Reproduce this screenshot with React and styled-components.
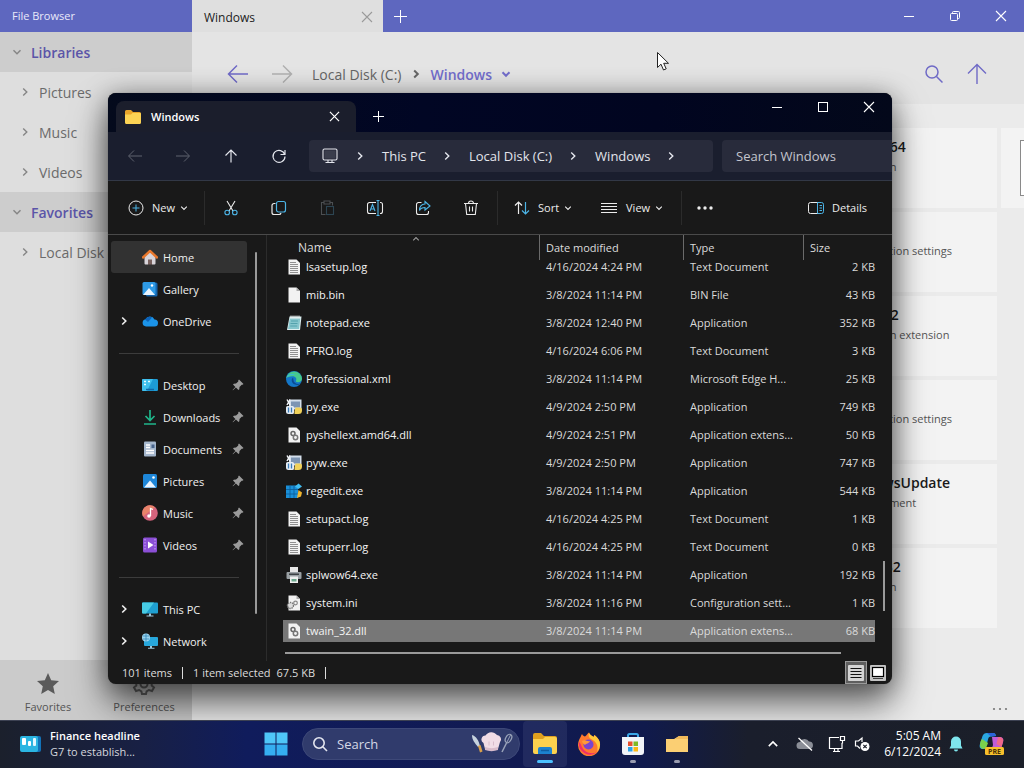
import React from "react";
import styled, { createGlobalStyle, css } from "styled-components";

const Global = createGlobalStyle`
  * { box-sizing: border-box; }
  html, body { margin: 0; }
  body, button, input { font-family: "Open Sans", "Noto Sans", sans-serif; }
  button { border: 0; padding: 0; background: none; color: inherit; font-size: inherit; cursor: default; }
  a { color: inherit; text-decoration: none; }
  svg { display: block; flex: none; }
`;

/* ---------- icons ---------- */

const Line = ({ w = 16, h = w, vb = "0 0 16 16", sw = 1, color = "currentColor", children }) => (
  <svg width={w} height={h} viewBox={vb} fill="none" stroke={color} strokeWidth={sw} aria-hidden="true">{children}</svg>
);
const Art = ({ w = 16, h = w, vb = "0 0 16 16", children }) => (
  <svg width={w} height={h} viewBox={vb} aria-hidden="true">{children}</svg>
);

const Chevron = ({ dir = "right", size = 10, sw = 1.4, color }) => {
  const d = { right: "M3.2 1.5 6.8 5 3.2 8.5", down: "M1.5 3.2 5 6.8 8.5 3.2", up: "M1.5 6.8 5 3.2 8.5 6.8" }[dir];
  return <Line w={size} vb="0 0 10 10" sw={sw} color={color}><path d={d} /></Line>;
};
const Close = ({ size = 12, sw = 1.1 }) => <Line w={size} vb="0 0 12 12" sw={sw}><path d="M1 1l10 10M11 1 1 11" /></Line>;
const Plus = ({ size = 13 }) => <Line w={size} vb={`0 0 ${size} ${size}`} sw={1}><path d={`M${size / 2} 0v${size}M0 ${size / 2}h${size}`} /></Line>;
const Minus = () => <Line w={12} vb="0 0 12 12" sw={1}><path d="M1 6.5h10" /></Line>;
const Square = () => <Line w={12} vb="0 0 12 12" sw={1}><rect x="1.5" y="1.5" width="9" height="9" /></Line>;
const Restore = () => <Line w={12} vb="0 0 12 12" sw={1}><rect x="1.5" y="3.5" width="7" height="7" rx="1" /><path d="M3.5 3.5v-1a1 1 0 0 1 1-1h5a1 1 0 0 1 1 1v5a1 1 0 0 1-1 1h-1" /></Line>;
const BigArrow = ({ flip }) => <Line w={22} vb="0 0 22 22" sw={1.5}>{flip ? <path d="M1 11h19M12 2.5l8.5 8.5-8.5 8.5" /> : <path d="M21 11H2M10 2.5 1.5 11l8.5 8.5" />}</Line>;
const BigUp = () => <Line w={22} vb="0 0 22 22" sw={1.4}><path d="M11 21V2M2 10.5 11 1.5l9 9" /></Line>;
const BigSearch = () => <Line w={20} vb="0 0 20 20" sw={1.5}><circle cx="8" cy="8" r="6" /><path d="m12.5 12.5 6 6" /></Line>;

const ArrowL = () => <Line><path d="M15 8H2M7 2.5 1.5 8 7 13.5" /></Line>;
const ArrowR = () => <Line><path d="M1 8h13M9 2.5 14.5 8 9 13.5" /></Line>;
const ArrowU = () => <Line sw={1.2}><path d="M8 14.5V2M2.5 7.500 8 2l5.500 5.500" /></Line>;
const Refresh = () => <Line sw={1.2}><path d="M13.700 6.500A6 6 0 1 0 14 8.500M14 2v4.500H9.500" /></Line>;
const Monitor = () => <Line sw={1.1}><rect x="1" y="1" width="14" height="11" rx="1.500" /><path d="M6 12v2.500M10 12v2.500M3.500 14.500h9" /><rect x="2.500" y="2.500" width="11" height="8" fill="#3a3d4c" stroke="none" /></Line>;

const BLUE = "#4cb4e6";
const NewIcon = () => <Line><circle cx="8" cy="8" r="7" /><path d="M8 4.500v7M4.500 8h7" stroke={BLUE} /></Line>;
const Cut = () => <Line sw={1.1}><path d="m4 1 6 10M12 1 6 11" /><circle cx="4.200" cy="12.500" r="2.300" stroke={BLUE} /><circle cx="11.800" cy="12.500" r="2.300" stroke={BLUE} /></Line>;
const Copy = () => <Line sw={1.2}><path d="M4.500 3.500H3a2 2 0 0 0-2 2v7a2 2 0 0 0 2 2h5a2 2 0 0 0 2-1.500" /><rect x="5.500" y="1.500" width="9" height="10.500" rx="2" stroke={BLUE} /></Line>;
const Paste = () => <Line color="#4c4f52" sw={1.1}><path d="M4.500 2.500h-2v12h4M11.500 2.500h2v3M5 1h6v3H5z" /><rect x="7.500" y="6.500" width="7" height="8" stroke="#2d4552" /></Line>;
const Rename = () => <Line w={18} h={16} vb="0 0 18 16" sw={1.1}><path d="M10 2.500H3.500a2 2 0 0 0-2 2v7a2 2 0 0 0 2 2H10M14 2.500h.5a2 2 0 0 1 2 2v7a2 2 0 0 1-2 2H14" /><path d="M12 0v16M10.500.500h3M10.500 15.500h3M4 11l2.500-6.500L9 11M5 9h3" stroke={BLUE} /></Line>;
const Share = () => <Line sw={1.1}><path d="M6.500 2.500h-3a2 2 0 0 0-2 2v8a2 2 0 0 0 2 2h8a2 2 0 0 0 2-2V11" /><path d="M10 1.500 15 6l-5 4V7.500c-3 0-4.500 1-5.500 3 0-4 2-6.300 5.500-6.500z" stroke={BLUE} /></Line>;
const Trash = () => <Line sw={1.1}><path d="M1 3.500h14M5.500 3.500a2.500 2.500 0 0 1 5 0M2.500 3.500l1.200 11h8.600l1.200-11M6.500 6.500v5M9.500 6.500v5" /></Line>;
const Sort = () => <Line sw={1.2}><path d="M4.500 14V2M1 5.500 4.500 2 8 5.500" /><path d="M11.500 2v12M8 10.500l3.500 3.500 3.500-3.500" stroke={BLUE} /></Line>;
const ViewIcon = () => <Line w={18} h={12} vb="0 0 18 12"><path d="M1 1.500h16M1 4.500h16M1 7.500h16M1 10.500h16" /></Line>;
const Dots = ({ r = 1.7 }) => <Art w={18} h={4} vb="0 0 18 4"><g fill="currentColor"><circle cx="3" cy="2" r={r} /><circle cx="9" cy="2" r={r} /><circle cx="15" cy="2" r={r} /></g></Art>;
const DetailsIcon = () => <Line w={16} h={14} vb="0 0 16 14"><path d="M10 1.500H2.500a2 2 0 0 0-2 2v7a2 2 0 0 0 2 2H10" /><path d="M9.500 1.500h4a2 2 0 0 1 2 2v7a2 2 0 0 1-2 2h-4zM11.500 4.500H14M11.500 7H14M11.500 9.500H14" stroke={BLUE} /></Line>;

const FolderArt = ({ w = 18, h = 16 }) => <Art w={w} h={h} vb="0 0 18 16"><path d="M1 2.500A1.500 1.500 0 0 1 2.500 1H7l2 2h6.500A1.500 1.500 0 0 1 17 4.500V6H1z" fill="#e9a52a" /><path d="M1 5.500h6L8.500 4H16a1 1 0 0 1 1 1v8.500a1.500 1.500 0 0 1-1.500 1.500h-13A1.500 1.500 0 0 1 1 13.500z" fill="#fcd354" /></Art>;
const Pin = () => <Art w={12} vb="0 0 12 12"><path d="M7 .5 11.500 5l-1 .8-.8-.1L7.500 8l-.2 2.300-.8.700-2.600-2.500L1 11.300.6 11l2.800-3L1 5.500l.8-.7L4 4.600l2.300-2.200-.1-.9z" fill="#9b9b9b" /></Art>;

const navArt = {
  home: <Art><path d="M2.500 7 8 2.500 13.500 7v7.500a1 1 0 0 1-1 1H10V11H6v4.500H3.500a1 1 0 0 1-1-1z" fill="#d8d4da" /><path d="M6 10.500h4v5H6z" fill="#78615e" /><path d="M1 8.500 8 2l7 6.500" fill="none" stroke="#e8772c" strokeWidth="2.400" strokeLinecap="round" strokeLinejoin="round" /></Art>,
  gallery: <Art><rect x="4" y="1.500" width="11.500" height="14" rx="1.500" fill="#1565ad" /><rect x=".5" y="1" width="13" height="13" rx="1.500" fill="#2e9ae6" /><path d="m1 14 6-7 6 7z" fill="#e9f5ff" /><circle cx="10" cy="4.500" r="1.200" fill="#fff" /></Art>,
  cloud: <Art><path d="M4 13.500a3.700 3.700 0 0 1-.5-7.300 5 5 0 0 1 9 .3A3.500 3.500 0 0 1 12.500 13.500z" fill="#1b93e8" /><path d="M3 6.500a5 5 0 0 1 7-2L6 9z" fill="#0b62b8" /></Art>,
  desktop: <Art><rect x="0" y="2" width="16" height="12" rx="1.200" fill="#1c9bd6" /><path d="M0 3.200A1.200 1.200 0 0 1 1.200 2H11L5 14H1.200A1.200 1.200 0 0 1 0 12.800z" fill="#3fc0ee" /><path d="M2 4.500h2M2 7.500h2M6 4.500h2" stroke="#e7faff" strokeWidth="1.500" /><path d="M4 12.500h8" stroke="#1169a8" strokeWidth="1.500" /></Art>,
  downloads: <Art><path d="M8 1v10M3.500 7 8 11.500 12.500 7M2 15h12" fill="none" stroke="#1fb58a" strokeWidth="1.700" /></Art>,
  documents: <Art><rect x="2" y=".5" width="12" height="15" rx="1" fill="#a4b6cc" /><path d="M4 4h4M4 6.500h4M4 9.500h8M4 12h8" stroke="#fff" strokeWidth="1.300" /><rect x="9.500" y="3.500" width="3" height="3.500" fill="#49658c" /></Art>,
  pictures: <Art><rect x="1" y="1" width="14" height="14" rx="1.500" fill="#1d86d8" /><path d="m2 14.500 6-7 6 7z" fill="#e9f5ff" /><circle cx="11.500" cy="4.500" r="1.300" fill="#fff" /></Art>,
  music: <Art><circle cx="8" cy="8" r="7.800" fill="#d4637c" /><path d="M8 .2A7.800 7.800 0 0 0 1 11.500L13 2.200A7.800 7.800 0 0 0 8 .2z" fill="#e8836a" /><path d="M8.500 11V3.500l2.500 1" fill="none" stroke="#fff" strokeWidth="1.300" /><circle cx="7" cy="11" r="1.800" fill="#fff" /></Art>,
  videos: <Art><rect x="1" y=".5" width="14" height="15" rx="1.500" fill="#8b4fd6" /><path d="M3 2v12M13 2v12" stroke="#cda9f7" strokeDasharray="1.500 1.500" /><path d="M6 4.500 11.500 8 6 11.500z" fill="#fff" /></Art>,
  pc: <Art><rect x="0" y="1.500" width="16" height="11" rx="1" fill="#1f9fd0" /><path d="M0 2.500a1 1 0 0 1 1-1h11L4 12.500H1a1 1 0 0 1-1-1z" fill="#47cbe4" /><path d="M7 12.500h2V15H7zM4.500 14.500h7v1h-7z" fill="#9fc8dc" /></Art>,
  network: <Art><rect x="2" y="4" width="14" height="9" rx="1" fill="#27a7dc" /><path d="M8 13h2v2H8zM6 14.700h6.500v1H6z" fill="#9fc8dc" /><circle cx="4" cy="4.500" r="4" fill="#9bd4ef" /><path d="M1 3h6M1 6h6M4 .5v8" stroke="#2a7fb2" strokeWidth=".7" /></Art>,
};

const page = <path d="M2.500.5h8L14 4v11.500H2.500z" fill="#f2f2f2" />;
const fileArt = {
  log: <Art>{page}<path d="M4 3.500h6M4 5.500h8M4 7.500h8M4 9.500h8M4 11.500h8M4 13.500h8" stroke="#858585" strokeWidth=".9" /></Art>,
  bin: <Art>{page}<path d="M10.500.5V4H14z" fill="#a9a9a9" /></Art>,
  notepad: <Art><path d="M3.500 1.500H15.500L14 15H1z" fill="#dff0f1" /><path d="M3.800 3.500h10.500L13 14H2z" fill="#86c6cd" /><path d="M5 .5v3M7 .5v3M9 .5v3M11 .5v3M13 .5v3" stroke="#e8eeee" /><path d="M5 6h7M4.500 8.500h7M4.200 11h7" stroke="#4899a5" strokeWidth=".8" /></Art>,
  edge: <Art><circle cx="8" cy="8" r="8" fill="#1477c8" /><path d="M.2 7A8 8 0 0 1 16 7.500c0 2.500-2 3.700-4 3.700-2.200 0-2.500-1-2-1.700 1.200-2-.8-4.500-3.800-4.300C3.500 5.300 1 6.500.2 7z" fill="#46c98c" /><path d="M.2 7C1.500 3.500 6 1.800 10 4 6 3 1.500 5 .2 7z" fill="#36b8e6" /><path d="M7 6.500c-2.500 2-1.500 7 4 7.500 1.500 0 3-.7 3.700-1.500-3.700 1.300-7.200-.5-7.200-3.500z" fill="#0b4a94" /></Art>,
  py: <Art><rect x="3" y=".5" width="12.500" height="10" fill="#d4dfeb" /><path d="M5 2.500h9v6H5z" fill="#7d95b3" /><path d="M1 .5 4 6M4 .5 1 6" stroke="#f2f5f9" strokeWidth="1.400" /><path d="M1.500 7h5A1.500 1.500 0 0 1 8 8.500v5A1.500 1.500 0 0 1 6.500 15h-4A2.500 2.500 0 0 1 0 12.500v-4A1.500 1.500 0 0 1 1.500 7z" fill="#e6edf5" /><path d="M2.500 8.500v5M5.500 8.500v5" stroke="#3a7cb8" strokeWidth="1.300" /><path d="M9.500 8.500H14a2 2 0 0 1 2 2v1a3.500 3.500 0 0 1-3.500 3.500H8.500v-3z" fill="#f1d25a" /></Art>,
  dll: <Art>{page}<circle cx="7" cy="6.500" r="2" fill="none" stroke="#666" strokeWidth="1.500" /><circle cx="9.500" cy="10.500" r="2.200" fill="none" stroke="#777" strokeWidth="1.500" /></Art>,
  reg: <Art><rect x="0" y="2.500" width="12" height="12.500" fill="#1a8fd8" /><path d="M4 2.500V15M8 2.500V15M0 6.500h12M0 11h12" stroke="#0b5c97" strokeWidth=".8" /><path d="m12.500.5 3.500 3L12.500 6 9 3.500z" fill="#41bdf1" /><path d="m12.500 7 3.500 2.500-1 4-4 1.500z" fill="#f0b52f" /></Art>,
  printer: <Art><path d="M4 0h8v6H4z" fill="#e6e6e6" /><rect x=".5" y="5" width="15" height="7" rx="1" fill="#9aa0a4" /><rect x="3" y="6.500" width="10" height="1.500" fill="#3c4144" /><path d="M4 9.500h8V16H4z" fill="#f0f0f0" /><path d="M5.500 12h5v2.500h-5z" fill="#6aa88c" /></Art>,
  ini: <Art>{page}<path d="M10.500.5V4H14z" fill="#a9a9a9" /><circle cx="4.500" cy="10.500" r="3" fill="#ddd" stroke="#777" strokeWidth="1.400" strokeDasharray="1.400 .8" /><circle cx="9.500" cy="8" r="1.800" fill="none" stroke="#888" strokeWidth="1.200" /></Art>,
};

/* ---------- desktop and background app ---------- */

const Desktop = styled.div`
  position: relative; min-height: 100vh; display: flex; flex-direction: column; overflow: hidden;
  background: #ebebeb; color: #222;
`;
const Browser = styled.div`flex: 1; display: flex; flex-direction: column;`;
const BrowserTitle = styled.header`
  display: flex; height: 32px; background: #5e67bf; color: #fff;
`;
const AppName = styled.div`width: 192px; padding-left: 12px; font-size: 11px; line-height: 32px; color: #e9e9fa;`;
const BrowserTab = styled.div`
  width: 191px; padding: 2px 10px 0 12px; display: flex; align-items: center; justify-content: space-between;
  background: #dfdfdf; color: #1c1c1c; font-size: 12px;
  button { color: #9a9a9a; }
`;
const CaptionButton = styled.button`
  width: ${(p) => p.$w || 46}px; padding-top: ${(p) => p.$pt || 0}px;
  display: flex; align-items: center; justify-content: center;
`;
const Spacer = styled.div`flex: 1;`;
const BrowserBody = styled.div`flex: 1; display: flex;`;
const Side = styled.nav`width: 192px; display: flex; flex-direction: column; background: #dedede;`;
const SideItem = styled.a`
  height: 40px; display: flex; align-items: center; gap: 9px; padding-left: 20px; font-size: 14px; color: #6b6b6b; white-space: nowrap;
  ${(p) => p.$head && css`padding-left: 12px; background: #cdcdcd; color: #5b55a8; font-weight: 600;`}
  svg { color: #858585; }
`;
const SideFoot = styled.div`display: flex; height: 60px; background: #cbcbcb;`;
const FootButton = styled.button`
  flex: 1; display: flex; flex-direction: column; align-items: center; padding-top: 12px; gap: 3px;
  font-size: 11px; line-height: 16px; color: #555;
`;
const Main = styled.main`flex: 1; min-width: 0; display: flex; flex-direction: column; overflow: hidden;`;
const MainBar = styled.div`
  height: 72px; padding: 12px 36px 0 35px; display: flex; align-items: center; background: #e4e4e4; color: #6f6ac6;
`;
const IconButton = styled.button`
  display: flex; color: ${(p) => p.$color || "inherit"}; margin-right: ${(p) => p.$mr || 0}px;
`;
const Crumbs = styled.div`
  display: flex; align-items: center; gap: 9px; font-size: 14px; color: #666;
  strong { color: #726dcb; font-weight: 600; margin-left: 1px; }
`;
const Tiles = styled.div`
  flex: 1; padding-top: 24px; display: grid; grid-template-columns: 240px 23px; grid-auto-rows: 80px; gap: 4px; justify-content: end;
`;
const Tile = styled.article`
  grid-column: ${(p) => p.$col || 1}; background: #f3f3f3; overflow: hidden; padding: ${(p) => (p.$col ? "12px 0 0 19px" : "8px 0 0 82px")};
  h3 { margin: 0; font-size: 14px; line-height: 22px; font-weight: 600; color: #1b1b1b; }
  p { margin: 0; font-size: 11px; line-height: 18px; color: #555; }
`;
const Thumb = styled.div`width: 56px; height: 56px; border: 1px solid #8a8a8a; background: #fff;`;
const MoreRow = styled.div`display: flex; justify-content: flex-end; padding: 0 15px 9px; color: #777;`;

/* ---------- explorer window ---------- */

const Explorer = styled.section`
  position: absolute; top: 93px; left: 108px; right: 132px; border-radius: 8px; overflow: hidden;
  background: #191919; color: #fff; font-size: 11px; white-space: nowrap;
  box-shadow: 0 0 1px rgba(60, 60, 60, 0.6), 0 20px 36px rgba(0, 0, 0, 0.55), 0 2px 26px rgba(0, 0, 0, 0.35);
`;
const ExTitle = styled.header`
  height: 39px; display: flex; background: linear-gradient(90deg, #040a1c, #010624 40%, #010520 70%, #03081a);
`;
const ExTab = styled.div`
  margin: 8px 0 0 8px; width: 240px; display: flex; align-items: center; padding: 0 16px 0 8px; gap: 9px;
  border-radius: 8px 8px 0 0; background: #1b1e2c; font-weight: 600; font-size: 11px;
  span { flex: 1; }
`;
const ExCaption = styled.div`display: flex; height: 28px;`;
const ExNav = styled.div`
  height: 49px; display: flex; align-items: center; padding-left: 3px; background: #1a1e2e; border-bottom: 1px solid #323846; color: #e3e5ec;
`;
const NavButton = styled.button`
  width: 48px; height: 32px; display: flex; align-items: center; justify-content: center; color: ${(p) => (p.$off ? "#5e626e" : "inherit")};
`;
const Address = styled.div`
  margin: 0 9px 0 6px; flex: 1; height: 32px; padding-left: 13px; display: flex; align-items: center; border-radius: 4px;
  background: #282b3b; font-size: 13px;
  > svg + svg { margin-left: 17px; }
  a { margin: 0 16px 0 17px; }
`;
const SearchInput = styled.input`
  width: 170px; height: 32px; border: 0; outline: 0; padding: 0 14px; border-radius: 4px 0 0 4px; background: #282b3b; color: #fff; font-size: 13px;
  &::placeholder { color: #c4c6ce; opacity: 1; }
`;
const Tools = styled.div`height: 54px; display: flex; align-items: center; border-bottom: 1px solid #4a4a4a; color: #ececec;`;
const Tool = styled.button`
  height: 36px; display: flex; align-items: center; padding: 0 ${(p) => p.$r ?? 16}px 0 ${(p) => p.$l ?? 16}px;
  span { margin: 0 5px 0 8px; }
`;
const SquareTool = styled(Tool)`width: 48px; padding: 0; justify-content: center;`;
const Rule = styled.i`width: 1px; height: 34px; background: #2b2b2b;`;
const Group = styled.div`display: flex; padding: 0 2px;`;
const Panes = styled.div`display: flex;`;
const Tree = styled.nav`
  width: 159px; display: flex; border-right: 1px solid #2c2c2c; padding: 6px 0 4px 3px;
`;
const TreeList = styled.div`width: 136px;`;
const TreeItem = styled.a`
  height: 32px; display: flex; align-items: center; padding: 0 3px 0 8px; border-radius: 3px; color: #f0f0f0;
  ${(p) => p.$on && css`background: #323232;`}
  > i { width: 23px; display: flex; }
  > span { flex: 1; padding-left: 5px; }
`;
const TreeRule = styled.hr`height: 1px; margin: 16px 8px 15px 8px; border: 0; background: #3c3c3c;`;
const TreeScroll = styled.i`width: 2px; margin: 11px 0 43px 8px; background: #9a9a9a; border-radius: 1px;`;
const Files = styled.div`flex: 1; min-width: 0; display: flex; flex-direction: column;`;
const FilesRow = styled.div`display: flex; padding-left: 16px;`;
const Table = styled.table`
  flex: 1; width: 100%; table-layout: fixed; border-collapse: collapse;
  th, td { padding: 0; font-weight: 400; text-align: left; }
  col.date { width: 144px; } col.type { width: 120px; } col.size { width: 72px; }
`;
const Head = styled.div`
  height: 25px; margin-bottom: -7px; line-height: 25px; padding-left: 6px; color: #dcdcdc;
  border-left: 1px solid ${(p) => (p.$first ? "transparent" : "#6a6a6a")};
  ${(p) => p.$first && css`
    display: flex; padding-left: 14px; font-size: 12px;
    svg { align-self: flex-start; margin-left: 80px; color: #9a9a9a; }
  `}
`;
const Cell = styled.div`
  height: 22px; margin: 3px 0; line-height: 22px; padding-left: 7px; color: #dadada;
  ${(p) => p.$name && css`display: flex; align-items: center; padding-left: 3px; gap: 4px; color: #f4f4f4;`}
  ${(p) => p.$num && css`text-align: right;`}
  ${(p) => p.$on && css`background: #777;`}
`;
const VScroll = styled.i`width: 2px; height: 50px; margin: 326px 7px 0 8px; background: #9a9a9a;`;
const HScroll = styled.i`height: 2px; margin: 7px 51px 7px 18px; background: #9a9a9a;`;
const Status = styled.footer`
  height: 23px; display: flex; align-items: center; padding: 0 3px 0 14px; color: #dcdcdc;
  i { width: 1px; height: 12px; margin: 0 10px 0 4px; background: #dcdcdc; }
  span { margin-right: 6px; }
`;
const ViewButton = styled.button`
  width: 22px; height: 23px; display: flex; align-items: center; justify-content: center;
  ${(p) => p.$on && css`border: 1px solid #9a9a9a; background: #5f5f5f;`}
`;

/* ---------- taskbar ---------- */

const Taskbar = styled.footer`
  position: relative; height: 48px; display: flex; align-items: center; color: #fff; box-shadow: inset 0 1px #3c4152;
  background: linear-gradient(90deg, #1b202c 0%, #182045 14%, #101c5c 24%, #111a52 50%, #101a4c 63%, #1a1e2c 73%, #1b1f29 100%);
`;
const Widgets = styled.button`
  width: 254px; display: flex; align-items: center; gap: 8px; padding-left: 19px; text-align: left; font-size: 11px; line-height: 16px;
  b { font-weight: 600; display: block; }
  span { color: #d5d7de; }
`;
const TaskButton = styled.button`
  width: 44px; height: 46px; display: flex; flex-direction: column; align-items: center; justify-content: center; position: relative;
  ${(p) => p.$active && css`background: rgba(120, 130, 170, 0.16); border-radius: 4px;`}
  &::after {
    content: ""; position: absolute; bottom: 4px; height: 3px; border-radius: 2px;
    width: ${(p) => (p.$active ? 16 : p.$open ? 6 : 0)}px; background: ${(p) => (p.$active ? "#4cc2ff" : "#9a9db0")};
  }
`;
const TaskSearch = styled.label`
  width: 218px; height: 32px; margin: 0 3px 0 4px; padding: 0 6px 0 9px; display: flex; align-items: center; gap: 9px; border-radius: 16px; background: #303b6c;
  border: 1px solid #3d4878;
  input { flex: 1; min-width: 0; border: 0; outline: 0; background: none; color: #fff; font-size: 13px; padding: 0; }
  input::placeholder { color: #d5d8e6; opacity: 1; }
`;
const Tray = styled.div`display: flex; align-items: center; padding-right: 11px;`;
const TrayButton = styled.button`width: ${(p) => p.$w || 32}px; height: 40px; display: flex; align-items: center; justify-content: center;`;
const Clock = styled.button`width: 70px; text-align: right; font-size: 12px; line-height: 16px; white-space: nowrap;`;

const Cursor = styled.div`position: absolute; left: 656px; top: 51px;`;

/* ---------- data ---------- */

const tiles = [
  ["splwow64", "Application"], ["system", "Configuration settings"], ["twain_32", "Application extension"],
  ["win", "Configuration settings"], ["WindowsUpdate", "Text document"], ["winhlp32", "Application"],
];
const tree = [
  ["home", "Home"], ["gallery", "Gallery"], ["cloud", "OneDrive", "expand"], null,
  ["desktop", "Desktop", "pin"], ["downloads", "Downloads", "pin"], ["documents", "Documents", "pin"],
  ["pictures", "Pictures", "pin"], ["music", "Music", "pin"], ["videos", "Videos", "pin"], null,
  ["pc", "This PC", "expand"], ["network", "Network", "expand"],
];
const files = [
  ["log", "lsasetup.log", "4/16/2024 4:24 PM", "Text Document", "2 KB"],
  ["bin", "mib.bin", "3/8/2024 11:14 PM", "BIN File", "43 KB"],
  ["notepad", "notepad.exe", "3/8/2024 12:40 PM", "Application", "352 KB"],
  ["log", "PFRO.log", "4/16/2024 6:06 PM", "Text Document", "3 KB"],
  ["edge", "Professional.xml", "3/8/2024 11:14 PM", "Microsoft Edge H...", "25 KB"],
  ["py", "py.exe", "4/9/2024 2:50 PM", "Application", "749 KB"],
  ["dll", "pyshellext.amd64.dll", "4/9/2024 2:51 PM", "Application extens...", "50 KB"],
  ["py", "pyw.exe", "4/9/2024 2:50 PM", "Application", "747 KB"],
  ["reg", "regedit.exe", "3/8/2024 11:14 PM", "Application", "544 KB"],
  ["log", "setupact.log", "4/16/2024 4:25 PM", "Text Document", "1 KB"],
  ["log", "setuperr.log", "4/16/2024 4:25 PM", "Text Document", "0 KB"],
  ["printer", "splwow64.exe", "3/8/2024 11:14 PM", "Application", "192 KB"],
  ["ini", "system.ini", "3/8/2024 11:16 PM", "Configuration sett...", "1 KB"],
  ["dll", "twain_32.dll", "3/8/2024 11:14 PM", "Application extens...", "68 KB"],
];

function FileBrowser() {
  return (
    <Browser>
      <BrowserTitle>
        <AppName>File Browser</AppName>
        <BrowserTab>Windows<button aria-label="Close tab"><Close /></button></BrowserTab>
        <CaptionButton $w={35} aria-label="New tab"><Plus /></CaptionButton>
        <Spacer />
        <CaptionButton aria-label="Minimize"><Minus /></CaptionButton>
        <CaptionButton aria-label="Restore"><Restore /></CaptionButton>
        <CaptionButton aria-label="Close"><Close /></CaptionButton>
      </BrowserTitle>
      <BrowserBody>
        <Side>
          <SideItem href="#" $head><Chevron dir="down" />Libraries</SideItem>
          {["Pictures", "Music", "Videos"].map((t) => <SideItem href="#" key={t}><Chevron />{t}</SideItem>)}
          <SideItem href="#" $head><Chevron dir="down" />Favorites</SideItem>
          <SideItem href="#"><Chevron />Local Disk (C:)</SideItem>
          <Spacer />
          <SideFoot>
            <FootButton>
              <Art w={24} vb="0 0 24 24"><path d="m12 1 3.200 7.200 7.800.8-5.800 5.300 1.600 7.700L12 18l-6.800 4 1.600-7.700L1 9l7.800-.8z" fill="#5a5a5a" /></Art>
              Favorites
            </FootButton>
            <FootButton>
              <Line w={24} vb="0 0 24 24" sw={2} color="#666"><circle cx="12" cy="12" r="3.500" /><path d="m10 2-.6 3-2.300 1.300L4 5.300 2 8.800 4.300 11v2.500L2 15.500 4 19l3.100-1 2.300 1.300.6 2.700h4l.6-2.700L16.900 18l3.100 1 2-3.500-2.300-2V11L22 8.800l-2-3.500-3.100 1L14.600 5 14 2z" /></Line>
              Preferences
            </FootButton>
          </SideFoot>
        </Side>
        <Main>
          <MainBar>
            <IconButton $mr={22} aria-label="Back"><BigArrow /></IconButton>
            <IconButton $mr={19} $color="#b0b0b0" aria-label="Forward"><BigArrow flip /></IconButton>
            <Crumbs>
              Local Disk (C:)<Chevron sw={2} /><strong>Windows</strong><Chevron dir="down" sw={2} color="#726dcb" />
            </Crumbs>
            <Spacer />
            <IconButton $mr={22} aria-label="Search"><BigSearch /></IconButton>
            <IconButton aria-label="Up"><BigUp /></IconButton>
          </MainBar>
          <Tiles>
            {tiles.map(([t, s]) => <Tile key={t}><h3>{t}</h3><p>{s}</p></Tile>)}
            <Tile $col={2} style={{ gridRow: 1 }}><Thumb /></Tile>
          </Tiles>
          <MoreRow><button aria-label="More"><Dots r={1.1} /></button></MoreRow>
        </Main>
      </BrowserBody>
    </Browser>
  );
}

function ExplorerWindow() {
  return (
    <Explorer>
      <ExTitle>
        <ExTab><FolderArt /><span>Windows</span><button aria-label="Close tab"><Close size={11} sw={1.3} /></button></ExTab>
        <CaptionButton $w={45} $pt={8} aria-label="New tab"><Plus size={11} /></CaptionButton>
        <Spacer />
        <ExCaption>
          <CaptionButton aria-label="Minimize"><Minus /></CaptionButton>
          <CaptionButton aria-label="Maximize"><Square /></CaptionButton>
          <CaptionButton aria-label="Close"><Close /></CaptionButton>
        </ExCaption>
      </ExTitle>
      <ExNav>
        <NavButton $off aria-label="Back"><ArrowL /></NavButton>
        <NavButton $off aria-label="Forward"><ArrowR /></NavButton>
        <NavButton aria-label="Up"><ArrowU /></NavButton>
        <NavButton aria-label="Refresh"><Refresh /></NavButton>
        <Address>
          <Monitor /><Chevron />
          {["This PC", "Local Disk (C:)", "Windows"].map((t) => <React.Fragment key={t}><a href="#">{t}</a><Chevron /></React.Fragment>)}
        </Address>
        <SearchInput type="search" placeholder="Search Windows" aria-label="Search Windows" />
      </ExNav>
      <Tools>
        <Tool $l={20}><NewIcon /><span>New</span><Chevron dir="down" size={8} /></Tool>
        <Rule />
        <Group>
          <SquareTool aria-label="Cut"><Cut /></SquareTool>
          <SquareTool aria-label="Copy"><Copy /></SquareTool>
          <SquareTool aria-label="Paste"><Paste /></SquareTool>
          <SquareTool aria-label="Rename"><Rename /></SquareTool>
          <SquareTool aria-label="Share"><Share /></SquareTool>
          <SquareTool aria-label="Delete"><Trash /></SquareTool>
        </Group>
        <Rule />
        <Tool><Sort /><span>Sort</span><Chevron dir="down" size={8} /></Tool>
        <Tool $l={12} $r={18}><ViewIcon /><span>View</span><Chevron dir="down" size={8} /></Tool>
        <Rule />
        <Tool $l={14} aria-label="More"><Dots /></Tool>
        <Spacer />
        <Tool $r={20}><DetailsIcon /><span>Details</span></Tool>
      </Tools>
      <Panes>
        <Tree>
          <TreeList>
            {tree.map((n, i) => n ? (
              <TreeItem href="#" key={n[1]} $on={i === 0}>
                <i>{n[2] === "expand" && <Chevron sw={1.6} />}</i>
                {navArt[n[0]]}<span>{n[1]}</span>{n[2] === "pin" && <Pin />}
              </TreeItem>
            ) : <TreeRule key={i} />)}
          </TreeList>
          <TreeScroll />
        </Tree>
        <Files>
          <FilesRow>
            <Table>
              <colgroup><col /><col className="date" /><col className="type" /><col className="size" /></colgroup>
              <thead>
                <tr>
                  <th><Head $first>Name<Chevron dir="up" size={8} /></Head></th>
                  <th><Head>Date modified</Head></th><th><Head>Type</Head></th><th><Head>Size</Head></th>
                </tr>
              </thead>
              <tbody>
                {files.map(([icon, name, date, type, size], i) => {
                  const on = i === files.length - 1;
                  return (
                    <tr key={name}>
                      <td><Cell $name $on={on}>{fileArt[icon]}{name}</Cell></td>
                      <td><Cell $on={on}>{date}</Cell></td><td><Cell $on={on}>{type}</Cell></td><td><Cell $num $on={on}>{size}</Cell></td>
                    </tr>
                  );
                })}
              </tbody>
            </Table>
            <VScroll />
          </FilesRow>
          <HScroll />
        </Files>
      </Panes>
      <Status>
        <span>101 items</span><i /><span>1 item selected</span><span>67.5 KB</span><i />
        <Spacer />
        <ViewButton $on aria-label="Details view"><Art><rect width="16" height="16" rx="1" fill="#d4d4d4" /><path d="M2.500 3.500h11M2.500 6.500h11M2.500 9.500h11M2.500 12.500h11" stroke="#111" /></Art></ViewButton>
        <ViewButton aria-label="Thumbnail view"><Art><rect width="16" height="16" rx="1" fill="#c4c4c4" /><rect x="2.500" y="2.500" width="11" height="9" fill="#fff" stroke="#000" strokeWidth="1.200" /><path d="M3 13.500h10" stroke="#444" /></Art></ViewButton>
      </Status>
    </Explorer>
  );
}

function Bar() {
  return (
    <Taskbar>
      <Widgets>
        <Art w={23} h={18} vb="0 0 23 18"><rect x="2" y="1" width="20" height="16" rx="2" fill="#1272b8" /><rect x="1" y="1" width="18" height="16" rx="2" fill="#2bb5e2" /><rect x="3" y="3" width="4" height="7" rx="1" fill="#fff" /><rect x="9" y="6" width="3" height="5" rx="1" fill="#fff" /><rect x="14" y="3" width="3" height="8" rx="1" fill="#e0f7ff" /></Art>
        <div><b>Finance headline</b><span>G7 to establish...</span></div>
      </Widgets>
      <TaskButton aria-label="Start">
        <Art w={24} vb="0 0 24 24"><g fill="#4fc6f7"><path d="M.5.500h11v11H.5zM12.500.500h11v11h-11z" /><path d="M.5 12.500h11v11H.5zM12.500 12.500h11v11h-11z" fill="#35aef0" /></g></Art>
      </TaskButton>
      <TaskSearch>
        <Line sw={1.6} color="#e4e6f0"><circle cx="7" cy="7" r="5.200" /><path d="m10.800 10.800 4.200 4.200" /></Line>
        <input type="text" placeholder="Search" aria-label="Search" />
        <Art w={42} h={24} vb="0 0 42 24">
          <path d="M1 3c4 1 7 6 8 11l-2 1C4 11 1 8 1 3z" fill="#c7d3de" /><path d="m7 14 2.500-1 2 6.500-2.500 1z" fill="#d9a04a" />
          <path d="M14 17 12.500 11a4 4 0 0 1 2-7.500 7 7 0 0 1 11.500-.5 4.300 4.300 0 0 1 3 7L27 17z" fill="#f1dce6" /><path d="M14 15c4 1.500 9 1.500 13 0v3c-4 1.500-9 1.500-13 0z" fill="#d9bccb" /><path d="M18 9.500v4M22.500 9.500v4" stroke="#d3b3c4" strokeWidth=".8" />
          <path d="m31 20 4.500-9" stroke="#98a2b8" strokeWidth="1.600" /><ellipse cx="37.500" cy="6.500" rx="2.800" ry="4.500" transform="rotate(28 37.500 6.500)" fill="none" stroke="#98a2b8" strokeWidth="1.300" /><path d="m35.500 11 4-8" stroke="#98a2b8" />
        </Art>
      </TaskSearch>
      <TaskButton $active aria-label="File Explorer">
        <Art w={26} h={24} vb="0 0 26 24"><path d="M1 3a2 2 0 0 1 2-2h6l3 3h11a2 2 0 0 1 2 2v3H1z" fill="#e0a01e" /><path d="M1 7h10l2-2h10a2 2 0 0 1 2 2v13a2 2 0 0 1-2 2H3a2 2 0 0 1-2-2z" fill="#fcd14e" /><path d="M6 22v-5a2 2 0 0 1 2-2h10a2 2 0 0 1 2 2v5z" fill="#1c82cf" /><path d="M9 18.500h8" stroke="#0e5da2" strokeWidth="1.500" /></Art>
      </TaskButton>
      <TaskButton aria-label="Firefox">
        <Art w={24} vb="0 0 24 24"><path d="M3 6c1-1 1-3 2-4 1 2 2 2 3 2.500C10 3 10 2 12 .5c1 3 3 3 4.500 4.500l1-2C21 6 23.500 9 23 13.500A11 11 0 0 1 1 13c0-3 1-5 2-7z" fill="#ff7a2f" /><path d="M12 .5c1 3 3 3 4.500 4.500l1-2C21 6 23.500 9 23 13.500a11 11 0 0 1-3 6.500c2-6-1-11-6-13-2-1-3-3-2-6.500z" fill="#ffc83a" /><path d="M2 10a11 11 0 0 0 18 10c-6 3-13 0-15-5-1-2-1-3-3-5z" fill="#ee2f6a" /><circle cx="11.500" cy="12.500" r="5" fill="#7a44d0" /><path d="M5 9c3-2 5 1 8 0-1 3-4 2-5 4-1-1-3-2-3-4z" fill="#ff9a3a" /></Art>
      </TaskButton>
      <TaskButton $open aria-label="Store">
        <Art w={24} vb="0 0 24 24"><path d="M7 6V3.500A1.500 1.500 0 0 1 8.500 2h7A1.500 1.500 0 0 1 17 3.500V6" fill="none" stroke="#3aa7e6" strokeWidth="2" /><path d="M1 5h22v15a3 3 0 0 1-3 3H4a3 3 0 0 1-3-3z" fill="#f1f4f8" /><path d="M7 9.500h4.500V14H7z" fill="#e8502e" /><path d="M12.500 9.500H17V14h-4.500z" fill="#7fba26" /><path d="M7 15h4.500v4.500H7z" fill="#2ba3e8" /><path d="M12.500 15H17v4.500h-4.500z" fill="#fbb915" /></Art>
      </TaskButton>
      <TaskButton $open aria-label="File Browser">
        <Art w={24} h={20} vb="0 0 24 20"><path d="M1 5h8l5-3h9v16H1z" fill="#fbcf73" /><path d="M14 2h9v3H10z" fill="#f0b95a" /></Art>
      </TaskButton>
      <Spacer />
      <Tray>
        <TrayButton aria-label="Hidden icons"><Chevron dir="up" size={12} sw={1.3} /></TrayButton>
        <TrayButton aria-label="OneDrive"><Art w={18} h={14} vb="0 0 18 14"><path d="M4 12a3.500 3.500 0 0 1 0-7 5 5 0 0 1 9-.5A3.800 3.800 0 0 1 14 12z" fill="#8b8e97" /><path d="M2.500 1 16 13.500" stroke="#fff" strokeWidth="1.300" /></Art></TrayButton>
        <TrayButton aria-label="Network"><Line w={18} vb="0 0 18 18" sw={1.2}><path d="M11 2.500H1.500v11H14V8M5 16.500h7M6.500 13.500v3M10 13.500v3" /><path d="M12.500 1.500h4v4h-4zM14.500 5.500v3" /></Line></TrayButton>
        <TrayButton $w={18} aria-label="Volume muted"><Line sw={1.2}><path d="M8 6V2L4.500 5H1.500v5h2L6 12.500" /><circle cx="11" cy="10.500" r="4.500" fill="#fff" stroke="none" /><path d="m9.300 8.800 3.400 3.400M12.700 8.800l-3.400 3.400" stroke="#1b1f29" /></Line></TrayButton>
        <Clock>5:05 AM<br />6/12/2024</Clock>
        <TrayButton $w={30} aria-label="Notifications"><Art w={14} h={16} vb="0 0 14 16"><path d="M7 .5a5 5 0 0 1 5 5v4l1.500 3H.5l1.500-3v-4a5 5 0 0 1 5-5zM5 13.500h4a2 2 0 0 1-4 0z" fill="#7fe6ee" /></Art></TrayButton>
        <TrayButton $w={42} aria-label="Copilot preview">
          <Art w={26} h={24} vb="0 0 26 24">
            <path d="M8 1h6c2 0 2.500 1 3 3l-5 .5c-2 0-2.500 1-3 3L7 15c-.5 1.500-1 2-3 2-3 0-4-2-3-5l2.500-8C4.500 2 5.500 1 8 1z" fill="#2aa7e0" />
            <path d="M1 13c0-3 1-5 2-6l6 4-2 5c-2 2-6 1-6-3z" fill="#7ad04c" />
            <path d="M8 1h6c2 0 2.500 1 3 3l-5 .5z" fill="#2a62d8" />
            <path d="M13 5h7c4 0 5 2 4 5l-2 7H11c2-1 2.500-2 3-4z" fill="#c05cd8" /><path d="M19 5c4 0 6 2 5 5l-1.500 5-5-3z" fill="#f0688a" />
            <rect x="6" y="15" width="19" height="8" rx="1.500" fill="#f8c02c" /><text x="15.500" y="21.500" textAnchor="middle" fontFamily="Open Sans, sans-serif" fontSize="7" fontWeight="700" fill="#4a3206">PRE</text>
          </Art>
        </TrayButton>
      </Tray>
    </Taskbar>
  );
}

export default function App() {
  return (
    <>
      <Global />
      <Desktop>
        <FileBrowser />
        <ExplorerWindow />
        <Bar />
        <Cursor><Art w={14} h={21} vb="0 0 14 21"><path d="M1.500 1.500v15l3.500-3.300L7.500 19l2.700-1.200-2.500-5.500h4.800z" fill="#fff" stroke="#222" /></Art></Cursor>
      </Desktop>
    </>
  );
}
